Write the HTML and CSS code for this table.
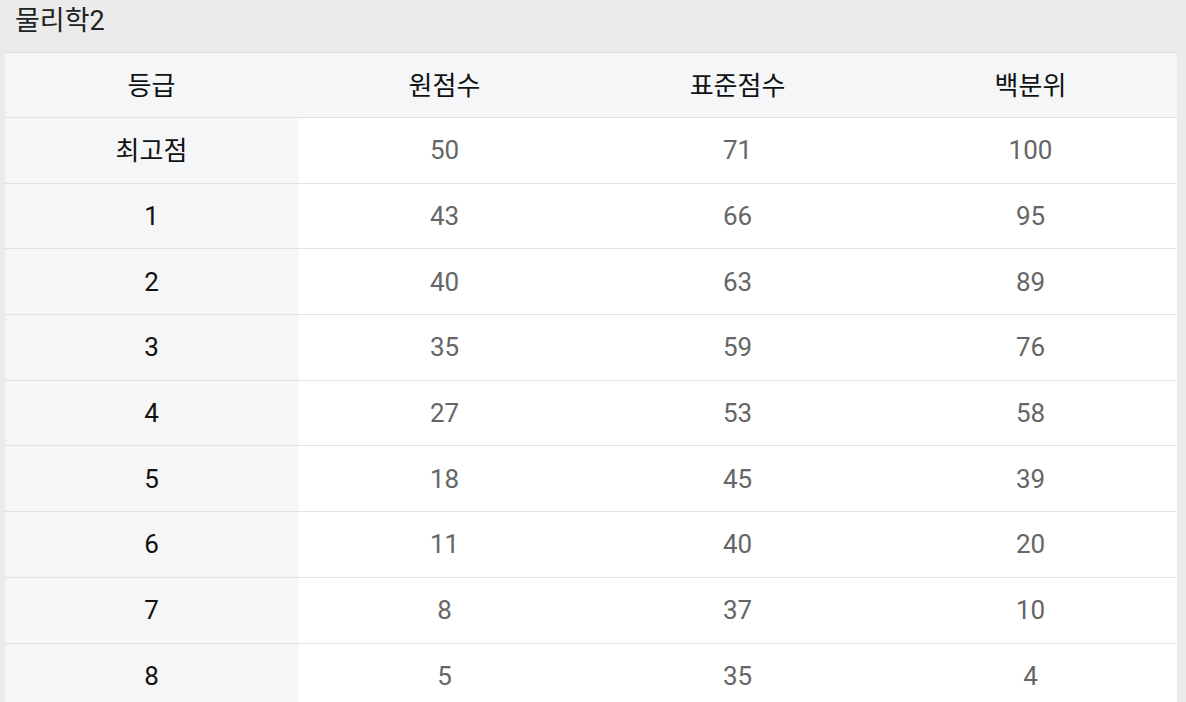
FILE: index.html
```html
<!DOCTYPE html>
<html lang="ko">
<head>
<meta charset="utf-8">
<link rel="stylesheet" href="styles.css">
</head>
<body>
<div class="page">
  <h1 class="title">물리학2</h1>
  <div class="table">
    <div class="row head"><div class="cell">등급</div><div class="cell">원점수</div><div class="cell">표준점수</div><div class="cell">백분위</div></div>
    <div class="row"><div class="cell grade ko">최고점</div><div class="cell">50</div><div class="cell">71</div><div class="cell">100</div></div>
    <div class="row"><div class="cell grade">1</div><div class="cell">43</div><div class="cell">66</div><div class="cell">95</div></div>
    <div class="row"><div class="cell grade">2</div><div class="cell">40</div><div class="cell">63</div><div class="cell">89</div></div>
    <div class="row"><div class="cell grade">3</div><div class="cell">35</div><div class="cell">59</div><div class="cell">76</div></div>
    <div class="row"><div class="cell grade">4</div><div class="cell">27</div><div class="cell">53</div><div class="cell">58</div></div>
    <div class="row"><div class="cell grade">5</div><div class="cell">18</div><div class="cell">45</div><div class="cell">39</div></div>
    <div class="row"><div class="cell grade">6</div><div class="cell">11</div><div class="cell">40</div><div class="cell">20</div></div>
    <div class="row"><div class="cell grade">7</div><div class="cell">8</div><div class="cell">37</div><div class="cell">10</div></div>
    <div class="row"><div class="cell grade">8</div><div class="cell">5</div><div class="cell">35</div><div class="cell">4</div></div>
  </div>
</div>
</body>
</html>
```
FILE: styles.css
```css
html, body {
  margin: 0;
  padding: 0;
  background: #ebebeb;
  height: 100%;
  overflow: hidden;
}
.page {
  padding: 0 9px 0 5px;
  font-family: Roboto, "Noto Sans CJK KR", sans-serif;
}
.title {
  margin: 0;
  height: 52px;
  box-sizing: border-box;
  padding: 0 0 0 10px;
  font-size: 27px;
  font-weight: 400;
  color: #222;
  line-height: 42px;
}
.table {
  border-top: 1px solid #dcdcdc;
  background: #fff;
}
.row {
  display: grid;
  grid-template-columns: repeat(4, 1fr);
  height: 65.7px;
  box-sizing: border-box;
  border-bottom: 1px solid #e2e2e2;
}
.row.head {
  height: 65px;
  background: #f5f6f8;
}
.cell {
  display: flex;
  align-items: center;
  justify-content: center;
  font-size: 26px;
  color: #666;
}
.head .cell {
  color: #111;
  padding-bottom: 4px;
}
.cell.grade {
  background: #f5f6f8;
  color: #111;
}
.cell.ko {
  padding-bottom: 3px;
}
```
